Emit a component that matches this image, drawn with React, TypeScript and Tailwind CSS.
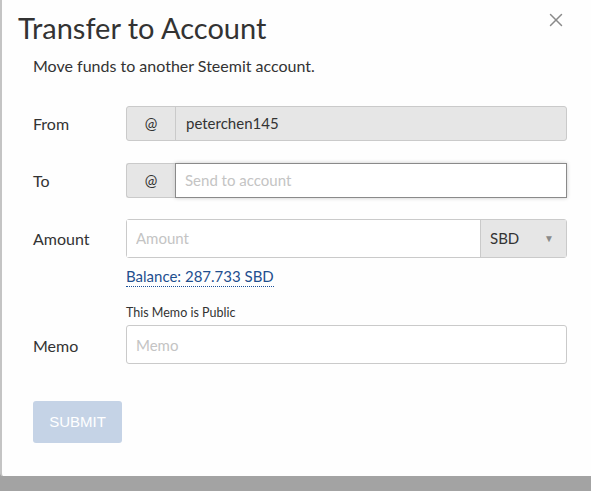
import { X } from "lucide-react";

const FONT = "font-['Lato','Noto_Sans',sans-serif]";

function Row({ label, children, className = "" }: { label: string; children: React.ReactNode; className?: string }) {
  return (
    <div className={`flex items-center ${className}`}>
      <div className="w-[93px] shrink-0 text-[16px] text-[#333]">{label}</div>
      <div className="flex-1">{children}</div>
    </div>
  );
}

export default function App() {
  return (
    <div className={`h-[491px] w-[591px] overflow-hidden bg-[#a3a3a3] ${FONT}`}>
      <div className="relative h-[476px] w-[600px] rounded-bl-[3px] border-l-2 border-[#c4c4c4] bg-[#fefefe]">
        <button className="absolute right-[33px] top-[9px] text-[#8a8a8a]">
          <X size={22} strokeWidth={1.6} />
        </button>

        <h1 className="pl-[16px] pt-[9px] text-[29px] leading-[38px] text-[#333]">Transfer to Account</h1>
        <p className="mt-[7px] pl-[31px] text-[16px] text-[#333]">Move funds to another Steemit account.</p>

        <div className="w-[565px] pl-[31px]">
          <Row label="From" className="mt-[28px]">
            <div className="flex h-[35px] rounded-[3px] border border-[#cacaca] bg-[#e6e6e6] text-[15px] text-[#333]">
              <span className="flex w-[49px] items-center justify-center border-r border-[#cacaca]">@</span>
              <span className="flex items-center pl-[10px]">peterchen145</span>
            </div>
          </Row>

          <Row label="To" className="mt-[22px]">
            <div className="flex h-[35px] text-[15px]">
              <span className="flex w-[49px] items-center justify-center rounded-l-[3px] border border-r-0 border-[#cacaca] bg-[#e6e6e6] text-[#333]">@</span>
              <input
                placeholder="Send to account"
                className="flex-1 border border-[#8a8a8a] bg-white px-[9px] text-[#333] shadow-[0_0_4px_#cacaca] outline-none placeholder:text-[#c4c4c4]"
              />
            </div>
          </Row>

          <div className="mt-[21px] flex">
            <div className="w-[93px] shrink-0 pt-[8px] text-[16px] text-[#333]">Amount</div>
            <div className="flex-1">
              <div className="flex h-[39px] rounded-[3px] border border-[#cacaca] text-[15px]">
                <input
                  placeholder="Amount"
                  className="min-w-0 flex-1 bg-white px-[9px] outline-none placeholder:text-[#c4c4c4]"
                />
                <div className="flex w-[86px] items-center justify-between border-l border-[#cacaca] bg-[#e6e6e6] pl-[9px] pr-[12px] text-[#333]">
                  <span>SBD</span>
                  <span className="text-[10px] text-[#8a8a8a]">▼</span>
                </div>
              </div>
              <a className="mt-[8px] inline-block border-b border-dotted border-[#1a5099] text-[15px] leading-[20px] text-[#1f4f8f]">
                Balance: 287.733 SBD
              </a>
            </div>
          </div>

          <div className="mt-[17px] flex">
            <div className="w-[93px] shrink-0 pt-[29px] text-[16px] text-[#333]">Memo</div>
            <div className="flex-1">
              <div className="text-[12.5px] leading-[16px] text-[#333]">This Memo is Public</div>
              <input
                placeholder="Memo"
                className="mt-[4px] h-[39px] w-full rounded-[3px] border border-[#cacaca] bg-white px-[9px] text-[15px] outline-none placeholder:text-[#c4c4c4]"
              />
            </div>
          </div>

          <button className="mt-[37px] h-[42px] w-[89px] rounded-[3px] bg-[#c5d3e6] font-['Liberation_Sans',sans-serif] text-[15px] text-white">
            SUBMIT
          </button>
        </div>
      </div>
    </div>
  );
}
